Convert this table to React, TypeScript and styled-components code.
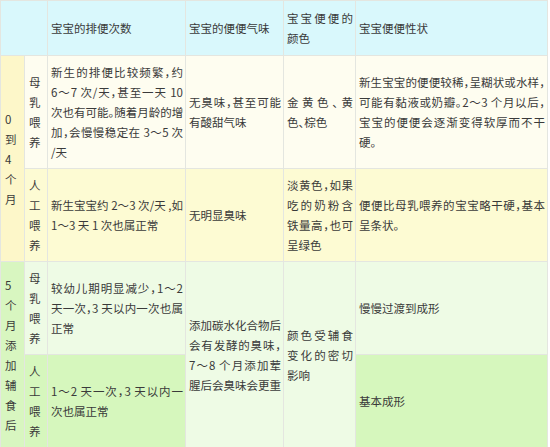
import React from 'react';
import styled, { createGlobalStyle } from 'styled-components';

const GlobalStyle = createGlobalStyle`
  html, body {
    margin: 0;
    padding: 0;
    background: #ffffff;
  }
  body {
    font-family: "Noto Sans CJK SC", "Noto Sans", "Liberation Sans", sans-serif;
  }
`;

const COLORS = {
  head: '#d9f8fc',
  youngSide: '#fdf7c9',
  youngMilk: '#fefdf0',
  youngFormula: '#fdfbd3',
  olderSide: '#d8f6c0',
  olderMilk: '#eefbe5',
  olderFormula: '#d6f7bd',
  line: '#e4e6e0',
  text: '#3a3a3a'
};

const Sheet = styled.table`
  width: 547px;
  table-layout: fixed;
  border-collapse: collapse;
  border: 1px solid ${COLORS.line};
  font-size: 11.5px;
  line-height: 20px;
  color: ${COLORS.text};
  font-feature-settings: "halt";
`;

const Row = styled.tr<{ $h: number }>`
  height: ${(p) => p.$h}px;
`;

const Cell = styled.td<{ $bg: string }>`
  background: ${(p) => p.$bg};
  border: 1px solid ${COLORS.line};
  padding: 6px 2px 6px 3px;
  vertical-align: middle;
  text-align: left;
  word-break: break-all;
`;

const StackCell = styled(Cell)`
  padding: 6px 4px;
`;

const Line = styled.span<{ $last?: boolean }>`
  display: block;
  white-space: nowrap;
  text-align: justify;
  text-align-last: ${(p) => (p.$last ? 'left' : 'justify')};
`;

const Lines: React.FC<{ items: string[] }> = ({ items }) => (
  <>
    {items.map((t, i) => (
      <Line key={i} $last={i === items.length - 1}>
        {t}
      </Line>
    ))}
  </>
);

const widths = [24, 23, 138, 98, 72, 192];

const App: React.FC = () => {
  return (
    <>
      <GlobalStyle />
      <Sheet>
        <colgroup>
          {widths.map((w, i) => (
            <col key={i} style={{ width: w }} />
          ))}
        </colgroup>
        <tbody>
          <Row $h={55}>
            <Cell $bg={COLORS.head} colSpan={2} />
            <Cell $bg={COLORS.head}>宝宝的排便次数</Cell>
            <Cell $bg={COLORS.head}>宝宝的便便气味</Cell>
            <Cell $bg={COLORS.head}>
              <Lines items={['宝宝便便的', '颜色']} />
            </Cell>
            <Cell $bg={COLORS.head}>宝宝便便性状</Cell>
          </Row>
          <Row $h={113}>
            <StackCell $bg={COLORS.youngSide} rowSpan={2}>
              0到4个月
            </StackCell>
            <StackCell $bg={COLORS.youngMilk}>母乳喂养</StackCell>
            <Cell $bg={COLORS.youngMilk}>
              <Lines
                items={[
                  '新生的排便比较频繁，约',
                  '6～7 次/天，甚至一天 10',
                  '次也有可能。随着月龄的增',
                  '加，会慢慢稳定在 3～5 次',
                  '/天'
                ]}
              />
            </Cell>
            <Cell $bg={COLORS.youngMilk}>
              <Lines items={['无臭味，甚至可能', '有酸甜气味']} />
            </Cell>
            <Cell $bg={COLORS.youngMilk}>
              <Lines items={['金黄色、黄', '色、棕色']} />
            </Cell>
            <Cell $bg={COLORS.youngMilk}>
              <Lines
                items={[
                  '新生宝宝的便便较稀，呈糊状或水样，',
                  '可能有黏液或奶瓣。2～3 个月以后，',
                  '宝宝的便便会逐渐变得软厚而不干',
                  '硬。'
                ]}
              />
            </Cell>
          </Row>
          <Row $h={92}>
            <StackCell $bg={COLORS.youngFormula}>人工喂养</StackCell>
            <Cell $bg={COLORS.youngFormula}>
              <Lines items={['新生宝宝约 2～3 次/天 ,如', '1～3 天 1 次也属正常']} />
            </Cell>
            <Cell $bg={COLORS.youngFormula}>无明显臭味</Cell>
            <Cell $bg={COLORS.youngFormula}>
              <Lines items={['淡黄色，如果', '吃的奶粉含', '铁量高，也可', '呈绿色']} />
            </Cell>
            <Cell $bg={COLORS.youngFormula}>
              <Lines items={['便便比母乳喂养的宝宝略干硬，基本', '呈条状。']} />
            </Cell>
          </Row>
          <Row $h={92}>
            <StackCell $bg={COLORS.olderSide} rowSpan={2}>
              5个月添加辅食后
            </StackCell>
            <StackCell $bg={COLORS.olderMilk}>母乳喂养</StackCell>
            <Cell $bg={COLORS.olderMilk}>
              <Lines items={['较幼儿期明显减少，1～2', '天一次，3 天以内一次也属', '正常']} />
            </Cell>
            <Cell $bg={COLORS.olderMilk} rowSpan={2}>
              <Lines items={['添加碳水化合物后', '会有发酵的臭味，', '7～8 个月添加荤', '腥后会臭味会更重']} />
            </Cell>
            <Cell $bg={COLORS.olderMilk} rowSpan={2}>
              <Lines items={['颜色受辅食', '变化的密切', '影响']} />
            </Cell>
            <Cell $bg={COLORS.olderMilk}>慢慢过渡到成形</Cell>
          </Row>
          <Row $h={93}>
            <StackCell $bg={COLORS.olderFormula}>人工喂养</StackCell>
            <Cell $bg={COLORS.olderFormula}>
              <Lines items={['1～2 天一次，3 天以内一', '次也属正常']} />
            </Cell>
            <Cell $bg={COLORS.olderFormula}>基本成形</Cell>
          </Row>
        </tbody>
      </Sheet>
    </>
  );
};

export default App;
